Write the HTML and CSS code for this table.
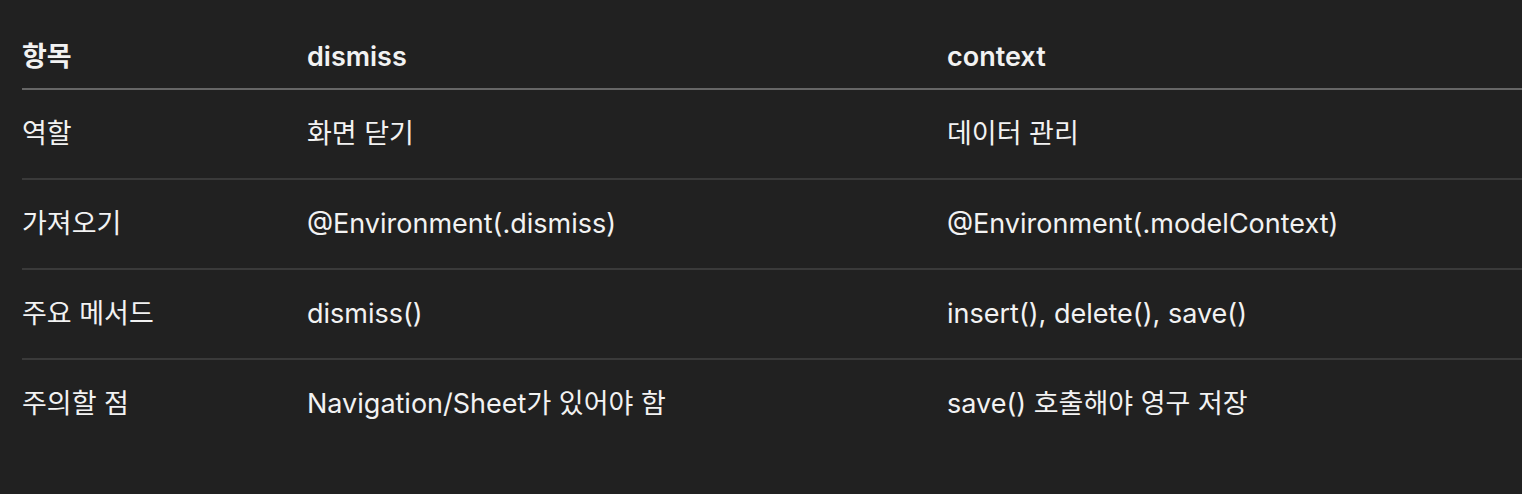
FILE: index.html
```html
<!DOCTYPE html>
<html lang="ko">
<head>
<meta charset="utf-8">
<link rel="stylesheet" href="styles.css">
</head>
<body>
<div class="table">
  <div class="row head">
    <div class="cell">항목</div>
    <div class="cell">dismiss</div>
    <div class="cell">context</div>
  </div>
  <div class="row">
    <div class="cell">역할</div>
    <div class="cell">화면 닫기</div>
    <div class="cell">데이터 관리</div>
  </div>
  <div class="row">
    <div class="cell">가져오기</div>
    <div class="cell">@Environment(.dismiss)</div>
    <div class="cell">@Environment(.modelContext)</div>
  </div>
  <div class="row">
    <div class="cell">주요 메서드</div>
    <div class="cell">dismiss()</div>
    <div class="cell">insert(), delete(), save()</div>
  </div>
  <div class="row last">
    <div class="cell">주의할 점</div>
    <div class="cell">Navigation/Sheet가 있어야 함</div>
    <div class="cell">save() 호출해야 영구 저장</div>
  </div>
</div>
</body>
</html>
```
FILE: styles.css
```css
html, body {
  margin: 0;
  padding: 0;
  background: #212121;
  height: 100%;
  overflow: hidden;
}
body {
  font-family: Inter, "Noto Sans CJK KR", sans-serif;
  color: #f2f2f2;
  font-size: 27px;
  padding: 24px 0 0 22px;
}
.table {
  display: flex;
  flex-direction: column;
}
.row {
  display: grid;
  grid-template-columns: 285px 640px 1fr;
  padding: 26px 0;
  line-height: 36px;
  border-bottom: 2px solid #3a3a3a;
}
.row.head {
  padding: 15px 0 13px;
  font-weight: 600;
  border-bottom-color: #666666;
}
.row.last {
  border-bottom: none;
}
.cell {
  white-space: nowrap;
}
```
